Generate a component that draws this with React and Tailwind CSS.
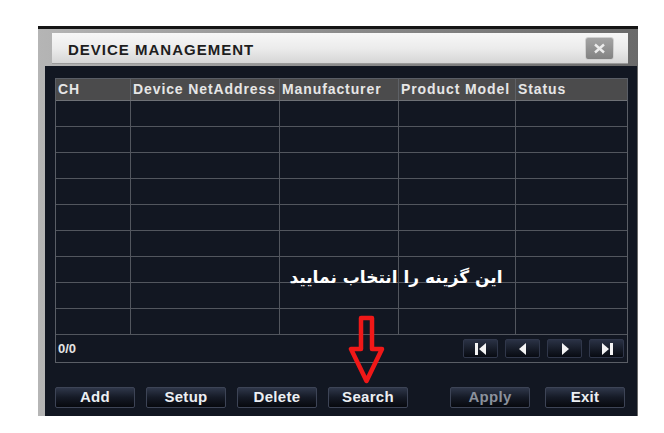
import React from "react";

const cols = ["CH", "Device NetAddress", "Manufacturer", "Product Model", "Status"];
const rows = Array.from({ length: 9 });

const Btn = ({ label, dim }) => (
  <div
    className={`w-[80px] h-[21px] flex items-center justify-center rounded-[2px] border border-[#3d4456] bg-gradient-to-b from-[#2f374a] via-[#151a26] to-[#07090e] text-[15px] font-bold tracking-[0.3px] ${
      dim ? "text-[#8b919c]" : "text-[#eceff3]"
    }`}
  >
    {label}
  </div>
);

const NavBtn = ({ children }) => (
  <div className="w-[35px] h-[19px] flex items-center justify-center rounded-[2px] border border-[#30374a] bg-gradient-to-b from-[#2a3245] to-[#080b12]">
    <svg width="18" height="14" viewBox="0 0 18 14" fill="#f4f4f4">
      {children}
    </svg>
  </div>
);

export default function App() {
  return (
    <div
      className="w-[664px] h-[433px] bg-white pt-[26px] pl-[38px]"
      style={{ fontFamily: '"Liberation Sans", Arial, sans-serif' }}
    >
      <div className="relative w-[600px] h-[390px] border-t-[3px] border-[#151515] bg-gradient-to-r from-[#b5b5b5] via-[#8c8c8c] to-[#6a6a6a] flex flex-col">
        {/* title bar */}
        <div className="ml-[14px] mr-[10px] mt-[4px] h-[31px] bg-gradient-to-b from-[#f7f7f7] via-[#ececec] to-[#d6d6d6] border-b border-[#9a9a9a] flex items-center justify-between pl-[16px] pr-[14px]">
          <span className="text-[15px] font-bold text-[#1e1e1e] tracking-[1px] leading-none mt-[2px]">
            DEVICE MANAGEMENT
          </span>
          <div className="w-[29px] h-[23px] rounded-[3px] border border-[#d0d0d0] bg-gradient-to-b from-[#a4a4a4] to-[#828282] flex items-center justify-center">
            <svg width="13" height="11" viewBox="0 0 13 11">
              <path d="M2 1.5 L11 9.5 M11 1.5 L2 9.5" stroke="#ececec" strokeWidth="2.4" />
            </svg>
          </div>
        </div>

        {/* body */}
        <div className="mt-[2px] ml-[7px] mr-[1px] flex-1 bg-[#121722] pl-[10px] pt-[12px]">
          <div className="w-[573px] border border-[#5a5e66]">
            <div className="grid grid-cols-[75px_149px_119px_117px_112px] h-[22px] bg-[#4b4b4c] border-b border-[#6e7176]">
              {cols.map((c, i) => (
                <div
                  key={c}
                  className={`flex items-center pl-[2px] text-[14px] font-bold text-[#e6e6e6] tracking-[0.9px] whitespace-nowrap ${
                    i < 4 ? "border-r border-[#5e6166]" : ""
                  }`}
                >
                  {c}
                </div>
              ))}
            </div>
            {rows.map((_, r) => (
              <div
                key={r}
                className="grid grid-cols-[75px_149px_119px_117px_112px] h-[26px] border-b border-[#52565e]"
              >
                {cols.map((c, i) => (
                  <div key={c} className={i < 4 ? "border-r border-[#52565e]" : ""} />
                ))}
              </div>
            ))}
            <div className="h-[27px] flex items-center justify-between pl-[2px] pr-[3px]">
              <span className="text-[13px] font-bold text-[#e4e4e4]">0/0</span>
              <div className="flex gap-[7px]">
                <NavBtn>
                  <rect x="3" y="1" width="3" height="12" />
                  <path d="M7 7 L14 1 L14 13 Z" />
                </NavBtn>
                <NavBtn>
                  <path d="M5 7 L12 1 L12 13 Z" />
                </NavBtn>
                <NavBtn>
                  <path d="M6 1 L13 7 L6 13 Z" />
                </NavBtn>
                <NavBtn>
                  <path d="M4 1 L11 7 L4 13 Z" />
                  <rect x="12" y="1" width="3" height="12" />
                </NavBtn>
              </div>
            </div>
          </div>

          <div className="mt-[24px] w-[570px] flex justify-between">
            <div className="flex gap-[11px]">
              <Btn label="Add" />
              <Btn label="Setup" />
              <Btn label="Delete" />
              <Btn label="Search" />
            </div>
            <div className="flex gap-[15px]">
              <Btn label="Apply" dim />
              <Btn label="Exit" />
            </div>
          </div>
        </div>

        {/* annotation */}
        <div
          dir="rtl"
          className="absolute left-[246px] top-[240px] w-[224px] text-center text-[17px] font-bold text-white leading-none whitespace-nowrap"
          style={{ fontFamily: '"DejaVu Sans", sans-serif' }}
        >
          این گزینه را انتخاب نمایید
        </div>
        <svg
          className="absolute left-[310px] top-[286px]"
          width="38"
          height="70"
          viewBox="0 0 38 70"
        >
          <path
            d="M13 3 L24 3 L24 34 L34 34 L18.5 66 L3 34 L13 34 Z"
            fill="none"
            stroke="#f01818"
            strokeWidth="4.5"
            strokeLinejoin="round"
          />
        </svg>
      </div>
    </div>
  );
}
